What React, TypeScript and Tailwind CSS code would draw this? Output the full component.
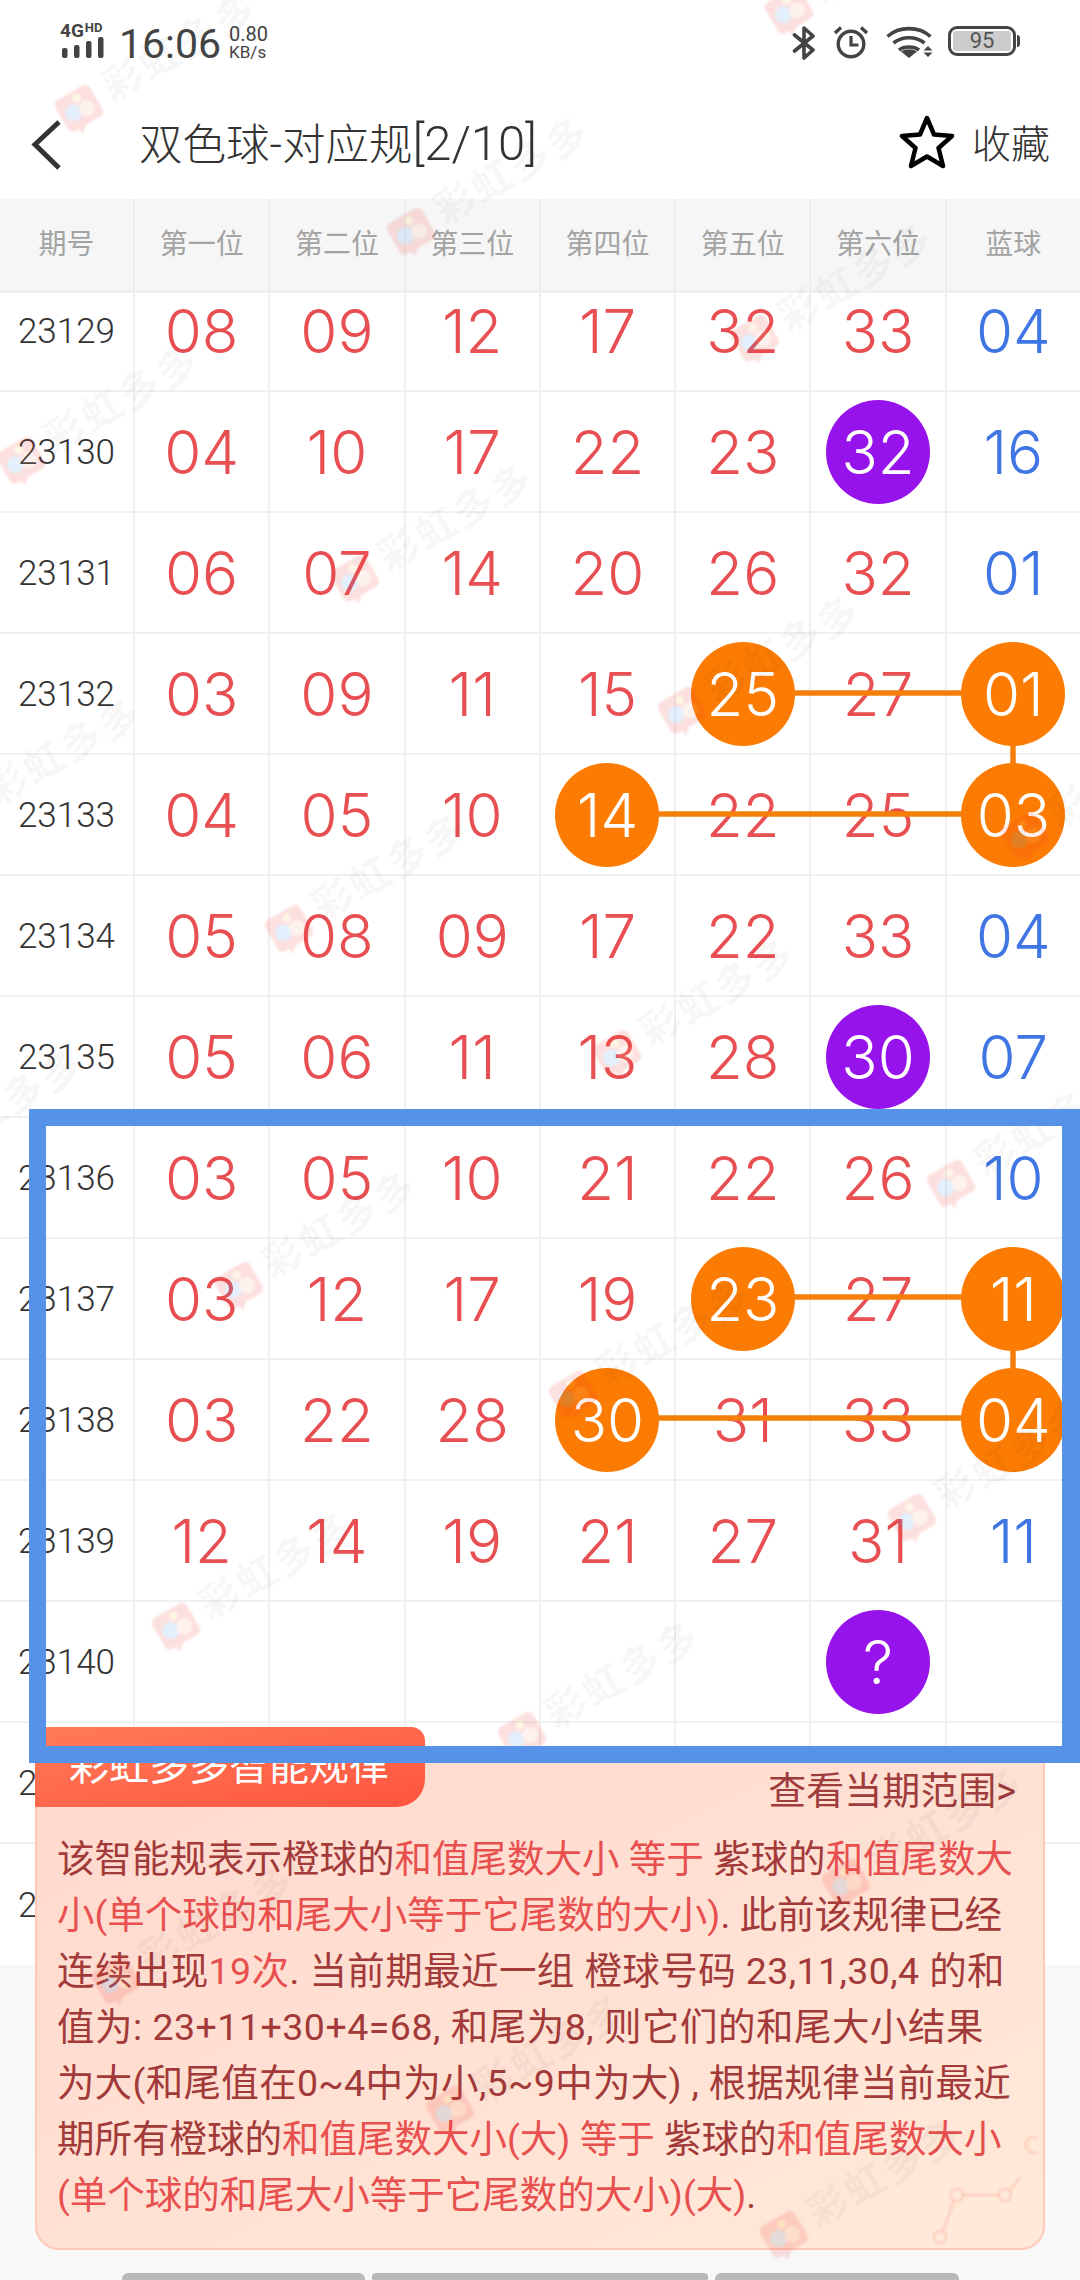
import React from "react";

type Mark = { [col: number]: "o" | "p" };
const rows: { id: string; n: string[]; m?: Mark }[] = [
  { id: "23129", n: ["08", "09", "12", "17", "32", "33", "04"] },
  { id: "23130", n: ["04", "10", "17", "22", "23", "32", "16"], m: { 5: "p" } },
  { id: "23131", n: ["06", "07", "14", "20", "26", "32", "01"] },
  { id: "23132", n: ["03", "09", "11", "15", "25", "27", "01"], m: { 4: "o", 6: "o" } },
  { id: "23133", n: ["04", "05", "10", "14", "22", "25", "03"], m: { 3: "o", 6: "o" } },
  { id: "23134", n: ["05", "08", "09", "17", "22", "33", "04"] },
  { id: "23135", n: ["05", "06", "11", "13", "28", "30", "07"], m: { 5: "p" } },
  { id: "23136", n: ["03", "05", "10", "21", "22", "26", "10"] },
  { id: "23137", n: ["03", "12", "17", "19", "23", "27", "11"], m: { 4: "o", 6: "o" } },
  { id: "23138", n: ["03", "22", "28", "30", "31", "33", "04"], m: { 3: "o", 6: "o" } },
  { id: "23139", n: ["12", "14", "19", "21", "27", "31", "11"] },
  { id: "23140", n: ["", "", "", "", "", "?", ""], m: { 5: "p" } },
  { id: "23141", n: ["", "", "", "", "", "", ""] },
  { id: "23142", n: ["", "", "", "", "", "", ""] },
];

const heads = ["期号", "第一位", "第二位", "第三位", "第四位", "第五位", "第六位", "蓝球"];

const marks: [number, number][] = [
  [80, 110], [412, 233], [756, 340], [790, 12], [22, 462], [356, 580], [683, 712], [1026, 837],
  [-36, 814], [290, 930], [618, 1055], [952, 1185], [-94, 1166], [240, 1287], [574, 1396],
  [913, 1519], [177, 1628], [523, 1737], [847, 1884], [117, 1982], [451, 2111], [785, 2236],
];

function Watermark({ x, y }: { x: number; y: number }) {
  return (
    <div className="absolute pointer-events-none w-0 h-0" style={{ left: x, top: y }}>
      <svg width="56" height="56" viewBox="0 0 56 56" className="absolute -left-[28px] -top-[28px] opacity-[0.15] blur-[1px]">
        <g transform="rotate(-30 28 28)">
          <path d="M8 14a6 6 0 0 1 6-6h28a6 6 0 0 1 6 6v24a6 6 0 0 1-6 6H26l-8 6v-6h-4a6 6 0 0 1-6-6z" fill="#f0332e" />
          <circle cx="21" cy="27" r="8.5" fill="#4a9bf0" />
          <circle cx="35" cy="30" r="8" fill="#f7b08a" />
          <circle cx="31" cy="16" r="4.5" fill="#f9c15a" />
        </g>
      </svg>
      <div className="absolute left-[26px] top-[-44px] origin-left rotate-[-30deg] whitespace-nowrap text-[40px] leading-[50px] tracking-[3px] font-bold text-[#000000]/[0.05]">
        彩虹多多
      </div>
    </div>
  );
}

function Ball({ v, kind }: { v: string; kind: "o" | "p" }) {
  return (
    <div
      className={
        "w-[104px] h-[104px] rounded-full flex items-center justify-center text-white " +
        (kind === "o" ? "bg-[#fc7b02]" : "bg-[#9613ec]")
      }
    >
      {v}
    </div>
  );
}

function Row({ r, first, last }: { r: (typeof rows)[number]; first?: boolean; last?: boolean }) {
  return (
    <div
      className={
        "grid grid-cols-[133px_repeat(7,1fr)] h-[121px] bg-white border-[#f0f0f0] " +
        (last ? "" : "border-b-2 ") +
        (first ? "-mt-[22px]" : "")
      }
    >
      <div className="flex items-center justify-center pt-[3px] text-[35px] text-[#333333] font-light">
        {r.id}
      </div>
      {r.n.map((v, i) => {
        const k = r.m?.[i];
        return (
          <div
            key={i}
            className={
              "flex items-center justify-center text-[60px] font-light border-l-2 border-[#f0f0f0] [font-family:Inter,'Noto_Sans_CJK_SC',sans-serif] " +
              (i === 6 ? "text-[#3f76e4]" : "text-[#e84f52]")
            }
          >
            {k ? <Ball v={v} kind={k} /> : v}
          </div>
        );
      })}
    </div>
  );
}

function Connectors() {
  const rowsY = [693, 814, 1297, 1418];
  return (
    <svg className="absolute left-0 top-0" width="1080" height="2280" viewBox="0 0 1080 2280">
      <g stroke="#f67f0c" strokeWidth="5.5">
        <line x1="793" y1={rowsY[0]} x2="962" y2={rowsY[0]} />
        <line x1="658" y1={rowsY[1]} x2="962" y2={rowsY[1]} />
        <line x1="793" y1={rowsY[2]} x2="962" y2={rowsY[2]} />
        <line x1="658" y1={rowsY[3]} x2="962" y2={rowsY[3]} />
        <line x1="1013" y1="745" x2="1013" y2="765" />
        <line x1="1013" y1="1349" x2="1013" y2="1369" />
      </g>
    </svg>
  );
}

const Hi = ({ children }: { children: React.ReactNode }) => <span className="text-[#e8504f]">{children}</span>;

function StatusLeft() {
  return (
    <div className="flex items-start ml-[60px] mt-[22px]">
      <div className="w-[46px] flex flex-col">
        <div className="flex items-start h-[15px]">
          <span className="text-[19px] leading-[17px] font-bold text-[#444444]">4G</span>
          <span className="text-[13px] leading-[11px] font-bold text-[#444444] ml-[1px]">HD</span>
        </div>
        <svg width="44" height="21" viewBox="0 0 44 21" className="ml-[2px]">
          <g fill="#444444">
            <rect x="0" y="11" width="5.5" height="10" rx="2" />
            <rect x="12" y="8" width="5.5" height="13" rx="2" />
            <rect x="24" y="4" width="5.5" height="17" rx="2" />
            <rect x="36" y="0" width="5.5" height="21" rx="2" />
          </g>
        </svg>
      </div>
      <div className="ml-[13px] mt-[2px] text-[41px] leading-[40px] text-[#444444]">16:06</div>
      <div className="ml-[8px] mt-[2px] flex flex-col text-[#444444] text-[20px] leading-[20px]">
        <span>0.80</span>
        <span className="text-[17px] leading-[17px]">KB/s</span>
      </div>
    </div>
  );
}

function StatusRight() {
  return (
    <div className="flex items-start mr-[60px] mt-[25px]">
      <svg width="24" height="36" viewBox="0 0 24 36" fill="none" stroke="#444444" strokeWidth="3.6" strokeLinejoin="round" strokeLinecap="round">
        <path d="M2.5 10 21 25 12 33V3l9 8L2.5 26" />
      </svg>
      <svg width="36" height="34" viewBox="0 0 36 34" fill="none" stroke="#444444" className="ml-[17px]">
        <circle cx="18" cy="19" r="12.8" strokeWidth="3.4" />
        <path d="M18 11v9h7.5" strokeWidth="3.2" />
        <path d="M2 8 8 2.5M34 8 28 2.5" strokeWidth="3.4" />
      </svg>
      <svg width="48" height="33" viewBox="0 0 48 33" fill="none" stroke="#444444" strokeWidth="3.6" className="ml-[17px]">
        <path d="M1.5 11.5C13 1 33 1 44.5 11.5" />
        <path d="M7.5 18C16 11 30 11 38.5 18" />
        <path d="M13 25C18 21 28 21 33 25" />
        <path d="M23 33 15 26.5C20 23.5 26 23.5 31 26.5Z" fill="#444444" stroke="none" />
        <path d="M42 21 46.5 25.5H37.5ZM37.5 27.5H46.5L42 32Z" fill="#444444" stroke="none" />
      </svg>
      <div className="ml-[14px] flex items-center mt-[1px]">
        <div className="w-[68px] h-[30px] rounded-[9px] border-[3px] border-[#444444] p-[2px]">
          <div className="w-full h-full rounded-[3px] bg-[#cccccc] flex items-center justify-center text-[22px] leading-[20px] text-[#555555]">
            95
          </div>
        </div>
        <div className="w-[3px] h-[12px] rounded-r-[3px] bg-[#444444] ml-[1px]" />
      </div>
    </div>
  );
}

function Panel() {
  return (
    <div className="absolute left-[35px] top-[1746px] w-[1010px] h-[504px] rounded-b-[24px] border-2 border-t-0 border-[#ffc9b8] bg-gradient-to-br from-[#ffd8ce] to-[#ffead9]">
      <div className="absolute -left-[2px] -top-[19px] w-[390px] h-[80px] rounded-t-[14px] rounded-br-[28px] bg-gradient-to-br from-[#ff7a58] to-[#ff5340] flex items-center pl-[34px] text-[40px] text-white">
        彩虹多多智能规律
      </div>
      <svg className="absolute left-[890px] top-[385px]" width="110" height="115" viewBox="0 0 110 115" fill="none" stroke="#ffb5a0" strokeOpacity="0.3" strokeWidth="4">
        <circle cx="13" cy="106" r="6" />
        <circle cx="30" cy="64" r="6" />
        <circle cx="78" cy="64" r="6" />
        <circle cx="107" cy="14" r="8" />
        <path d="M16 100 27 70M36 64h36M83 59l10-12" />
      </svg>
      <div className="pt-[25px] pr-[27px] text-right text-[38px] leading-[40px] text-[#a03c3c]">查看当期范围&gt;</div>
      <div className="mt-[20px] pl-[20px] text-[37.5px] leading-[56px] text-[#a33a3a] whitespace-pre">
        <div>该智能规表示橙球的<Hi>和值尾数大小 等于</Hi> 紫球的<Hi>和值尾数大</Hi></div>
        <div><Hi>小(单个球的和尾大小等于它尾数的大小)</Hi>. 此前该规律已经</div>
        <div className="tracking-[0.4px]">连续出现<Hi>19次</Hi>. 当前期最近一组 橙球号码 23,11,30,4 的和</div>
        <div className="tracking-[0.5px]">值为: 23+11+30+4=68, 和尾为8, 则它们的和尾大小结果</div>
        <div className="tracking-[0.3px]">为大(和尾值在0~4中为小,5~9中为大) , 根据规律当前最近</div>
        <div>期所有橙球的<Hi>和值尾数大小(大) 等于</Hi> 紫球的<Hi>和值尾数大小</Hi></div>
        <div><Hi>(单个球的和尾大小等于它尾数的大小)(大)</Hi>.</div>
      </div>
    </div>
  );
}

export default function App() {
  return (
    <div className="relative w-[1080px] h-[2280px] overflow-hidden flex flex-col bg-[#f8f8f8] [font-family:Roboto,'Noto_Sans_CJK_SC',sans-serif]">
      <div className="h-[99px] shrink-0 bg-white flex justify-between">
        <StatusLeft />
        <StatusRight />
      </div>
      <div className="h-[100px] shrink-0 bg-white flex items-center pb-[8px]">
        <svg width="32" height="52" viewBox="0 0 32 52" fill="none" stroke="#333333" strokeWidth="5" className="ml-[30px]">
          <path d="M29 3 5 25.5 29 49" />
        </svg>
        <div className="ml-[77px] text-[43.5px] leading-[50px] text-[#333333] font-light">
          双色球-对应规<span className="text-[49px]">[2/10]</span>
        </div>
        <div className="ml-auto flex items-center mr-[30px]">
          <svg width="56" height="54" viewBox="0 0 56 54" fill="none" stroke="#000000" strokeWidth="4.5" strokeLinejoin="round" className="-mt-[6px]">
            <path d="M28 3 35 19.5 53 21 39.5 33 44 51 28 41.5 12 51 16.5 33 3 21 21 19.5Z" />
          </svg>
          <span className="ml-[17px] text-[39px] leading-[50px] text-[#333333] font-light">收藏</span>
        </div>
      </div>
      <div className="grid grid-cols-[133px_repeat(7,1fr)] h-[94px] shrink-0 bg-[#f6f6f6] border-b-[3px] border-[#f0f0f0] relative z-10">
        {heads.map((h, i) => (
          <div
            key={h}
            className={
              "flex items-center justify-center text-[28px] text-[#a3a3a3] border-[#eeeeee] " +
              (i > 0 ? "border-l-2" : "")
            }
          >
            {h}
          </div>
        ))}
      </div>
      <div className="overflow-hidden shrink-0">
        {rows.map((r, i) => (
          <Row key={r.id} r={r} first={i === 0} last={i === rows.length - 1} />
        ))}
      </div>
      <div className="flex mt-auto ml-[122px] gap-[7px] shrink-0">
        <div className="w-[243px] h-[7px] rounded-t-[6px] bg-[#b9b9b9]" />
        <div className="w-[336px] h-[7px] rounded-t-[4px] bg-[#b9b9b9]" />
        <div className="w-[244px] h-[7px] rounded-t-[6px] bg-[#b9b9b9]" />
      </div>
      <Connectors />
      <Panel />
      <div className="absolute inset-0 overflow-hidden pointer-events-none z-20">
        {marks.map(([x, y]) => (
          <Watermark key={x + "-" + y} x={x} y={y} />
        ))}
      </div>
      <div className="absolute left-[29px] top-[1109px] w-[1051px] h-[654px] border-[17px] border-r-[18px] border-[#5592e8] z-30" />
    </div>
  );
}
